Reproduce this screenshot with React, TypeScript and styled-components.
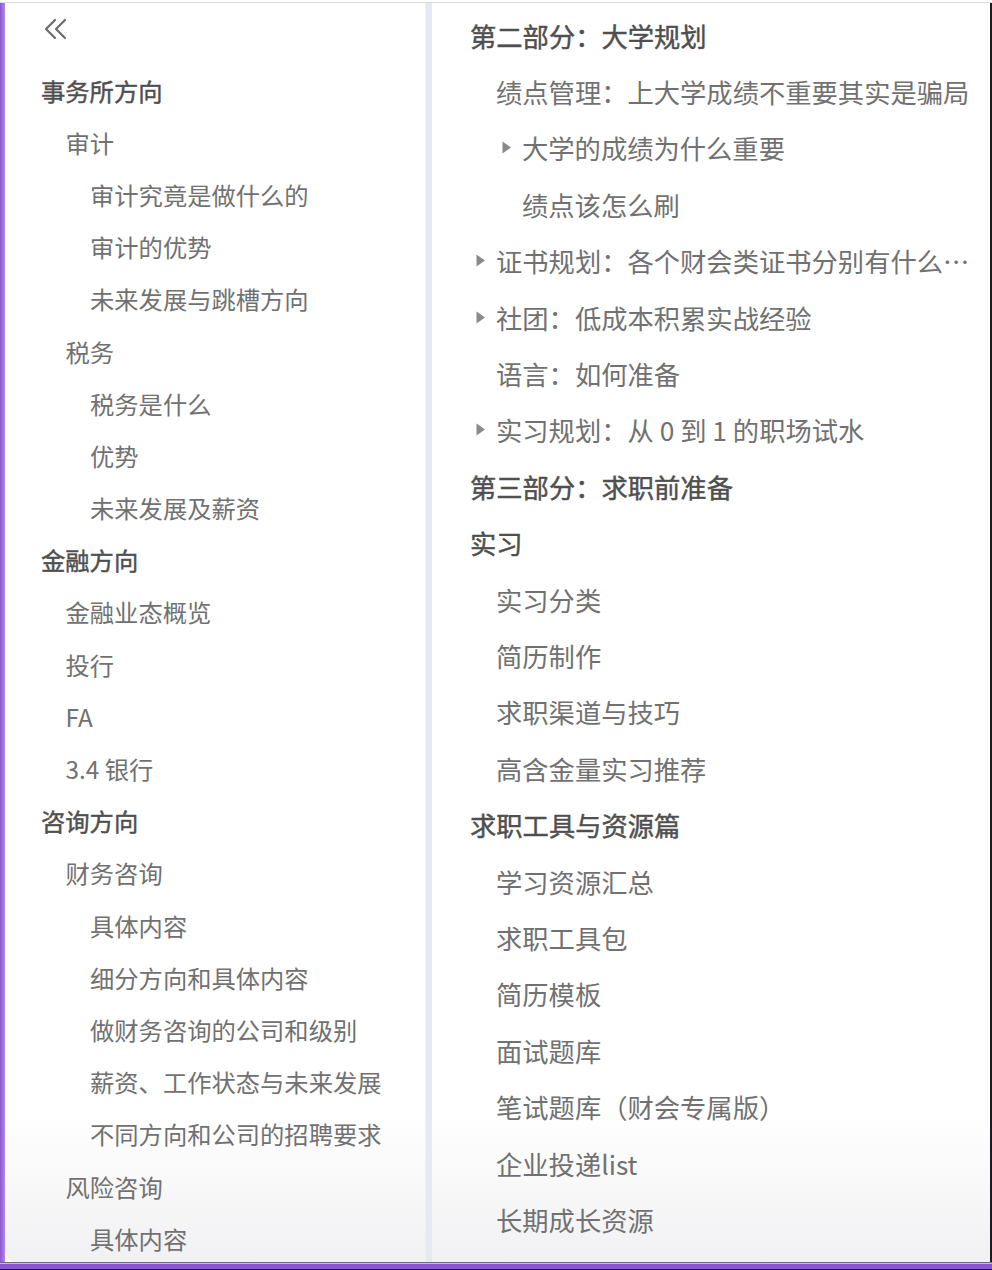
import styled, { createGlobalStyle } from "styled-components"

const GlobalStyle = createGlobalStyle`
    html, body {
        margin: 0;
        padding: 0;
        background: #ffffff;
    }
    * {
        box-sizing: border-box;
    }
`

const Frame = styled.div`
    width: 992px;
    height: 1270px;
    display: flex;
    flex-direction: column;
    background: #ffffff;
    overflow: hidden;
    font-family: "Noto Sans CJK SC", "Noto Sans", sans-serif;
`

const TopEdge = styled.div`
    height: 3px;
    flex: none;
    background: #ffffff;
    border-bottom: 1px solid #dcdcdc;
`

const Body = styled.div`
    flex: 1;
    display: flex;
    min-height: 0;
`

const PurpleStrip = styled.div`
    width: 5px;
    flex: none;
    background: linear-gradient(90deg, #8a56cf, #b08ae6);
`

const DarkStrip = styled.div`
    width: 2px;
    flex: none;
    background: #1c1a22;
`

const Panel = styled.div<{ $width?: number }>`
    ${p => (p.$width ? `width: ${p.$width}px; flex: none;` : "flex: 1; min-width: 0;")}
    overflow: hidden;
    background: linear-gradient(180deg, #ffffff 0%, #ffffff 88%, #f1f1f3 100%);
`

const LeftPanel = styled(Panel)`
    border-bottom-left-radius: 12px;
    padding-left: 36px;
`

const RightPanel = styled(Panel)`
    padding: 4px 0 0 38px;
`

const Divider = styled.div`
    width: 7px;
    flex: none;
    background: #e6e9f1;
    border-left: 1px solid #eef0f5;
`

const CollapseRow = styled.div`
    height: 61px;
    display: flex;
    align-items: flex-start;
    padding: 14px 0 0 2px;
    color: #6b6b6b;
`

const Row = styled.div<{ $level: number; $heading?: boolean; $step: number; $height: number; $size: number }>`
    height: ${p => p.$height}px;
    display: flex;
    align-items: center;
    padding-left: ${p => p.$level * p.$step}px;
    font-size: ${p => p.$size}px;
    color: ${p => (p.$heading ? "#4f4f4f" : "#717171")};
    font-weight: 400;
    -webkit-text-stroke: ${p => (p.$heading ? "0.45px #4f4f4f" : "0")};
    white-space: nowrap;
`

const Label = styled.span`
    overflow: hidden;
    text-overflow: ellipsis;
    min-width: 0;
`

const Toggle = styled.span`
    width: 22px;
    margin-left: -22px;
    flex: none;
    display: flex;
    align-items: center;
    justify-content: flex-start;
    padding-left: 1px;
    color: #8a8a8a;
`

const Bottom = styled.div`
    flex: none;
    height: 8px;
    border-top: 1px solid #6e6b72;
    background: linear-gradient(180deg, #c9b5ee 0px, #c9b5ee 1px, #8b55d3 1px, #8b55d3 6px, #1f1b27 6px);
`

type Item = { text: string; level: number; heading?: boolean; toggle?: boolean }

const leftItems: Item[] = [
    { text: "事务所方向", level: 0, heading: true },
    { text: "审计", level: 1 },
    { text: "审计究竟是做什么的", level: 2 },
    { text: "审计的优势", level: 2 },
    { text: "未来发展与跳槽方向", level: 2 },
    { text: "税务", level: 1 },
    { text: "税务是什么", level: 2 },
    { text: "优势", level: 2 },
    { text: "未来发展及薪资", level: 2 },
    { text: "金融方向", level: 0, heading: true },
    { text: "金融业态概览", level: 1 },
    { text: "投行", level: 1 },
    { text: "FA", level: 1 },
    { text: "3.4 银行", level: 1 },
    { text: "咨询方向", level: 0, heading: true },
    { text: "财务咨询", level: 1 },
    { text: "具体内容", level: 2 },
    { text: "细分方向和具体内容", level: 2 },
    { text: "做财务咨询的公司和级别", level: 2 },
    { text: "薪资、工作状态与未来发展", level: 2 },
    { text: "不同方向和公司的招聘要求", level: 2 },
    { text: "风险咨询", level: 1 },
    { text: "具体内容", level: 2 },
]

const rightItems: Item[] = [
    { text: "第二部分：大学规划", level: 0, heading: true },
    { text: "绩点管理：上大学成绩不重要其实是骗局", level: 1 },
    { text: "大学的成绩为什么重要", level: 2, toggle: true },
    { text: "绩点该怎么刷", level: 2 },
    { text: "证书规划：各个财会类证书分别有什么作用", level: 1, toggle: true },
    { text: "社团：低成本积累实战经验", level: 1, toggle: true },
    { text: "语言：如何准备", level: 1 },
    { text: "实习规划：从 0 到 1 的职场试水", level: 1, toggle: true },
    { text: "第三部分：求职前准备", level: 0, heading: true },
    { text: "实习", level: 0, heading: true },
    { text: "实习分类", level: 1 },
    { text: "简历制作", level: 1 },
    { text: "求职渠道与技巧", level: 1 },
    { text: "高含金量实习推荐", level: 1 },
    { text: "求职工具与资源篇", level: 0, heading: true },
    { text: "学习资源汇总", level: 1 },
    { text: "求职工具包", level: 1 },
    { text: "简历模板", level: 1 },
    { text: "面试题库", level: 1 },
    { text: "笔试题库（财会专属版）", level: 1 },
    { text: "企业投递list", level: 1 },
    { text: "长期成长资源", level: 1 },
]

const Chevrons = () => (
    <svg width="26" height="24" viewBox="0 0 26 24" fill="none" stroke="currentColor" strokeWidth="2.2" strokeLinecap="round" strokeLinejoin="round">
        <polyline points="12,3 3,12 12,21" />
        <polyline points="22,3 13,12 22,21" />
    </svg>
)

const Triangle = () => (
    <svg width="11" height="15" viewBox="0 0 11 15">
        <path d="M1.5 1.5 L10 7.5 L1.5 13.5 Z" fill="currentColor" />
    </svg>
)

const App = () => {
    return (
        <Frame>
            <GlobalStyle />
            <TopEdge />
            <Body>
                <PurpleStrip />
                <LeftPanel $width={420}>
                    <CollapseRow>
                        <Chevrons />
                    </CollapseRow>
                    {leftItems.map((item, i) => (
                        <Row key={i} $level={item.level} $heading={item.heading} $step={24.5} $height={52.2} $size={24.3}>
                            <Label>{item.text}</Label>
                        </Row>
                    ))}
                </LeftPanel>
                <Divider />
                <RightPanel>
                    {rightItems.map((item, i) => (
                        <Row key={i} $level={item.level} $heading={item.heading} $step={26} $height={56.4} $size={26.3}>
                            {item.toggle && (
                                <Toggle>
                                    <Triangle />
                                </Toggle>
                            )}
                            <Label>{item.text}</Label>
                        </Row>
                    ))}
                </RightPanel>
                <DarkStrip />
            </Body>
            <Bottom />
        </Frame>
    )
}

export default App
